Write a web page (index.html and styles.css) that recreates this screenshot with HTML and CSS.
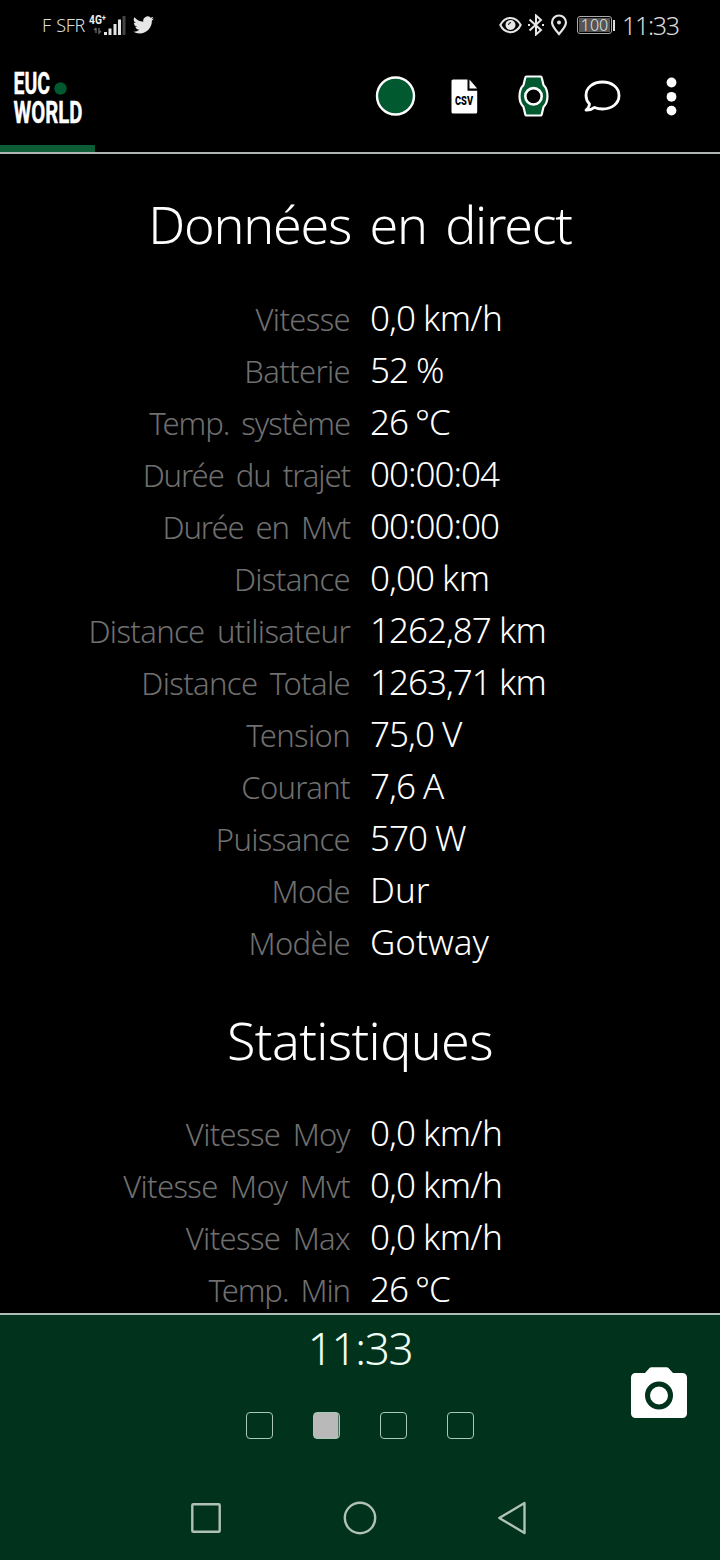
FILE: index.html
```html
<!DOCTYPE html>
<html lang="fr">
<head>
<meta charset="utf-8">
<title>EUC World</title>
<link rel="stylesheet" href="styles.css">
</head>
<body>
<div class="screen">
  <header class="top">
    <div class="status">
      <span class="carrier">F SFR</span>
      <svg class="signal" width="38" height="24" viewBox="0 0 38 24">
        <text class="network" x="1" y="11" textLength="17" lengthAdjust="spacingAndGlyphs">4G⁺</text>
        <path d="M8 15v5M6 17l2-2M11 15v5l2-2" fill="none" stroke="#666" stroke-width="1.4"/>
        <path d="M16 19h3v3h-3zM20.500 15.500h3v6.500h-3zM25.500 11h3v11h-3zM30 6.500h3v15.500h-3z" fill="#e4e4e4"/>
        <path d="M34.500 3h3v19h-3z" fill="#444"/>
      </svg>
      <svg class="bird" width="21" height="18" viewBox="0 2 24 20"><path fill="#e6e6e6" d="M23.950 4.570a10 10 0 0 1-2.820.77 4.960 4.960 0 0 0 2.160-2.720c-.95.550-2 .950-3.130 1.180a4.920 4.920 0 0 0-8.380 4.480C7.690 8.090 4.070 6.130 1.640 3.160a4.920 4.920 0 0 0 1.520 6.570 4.900 4.900 0 0 1-2.230-.61v.06a4.920 4.920 0 0 0 3.950 4.830 5 5 0 0 1-2.210.080 4.940 4.940 0 0 0 4.600 3.420A9.870 9.870 0 0 1 0 19.540a14 14 0 0 0 7.550 2.210c9.050 0 14-7.500 14-13.980l-.02-.64a9.900 9.900 0 0 0 2.420-2.560z"/></svg>
      <span class="spring"></span>
      <svg class="eye" width="23" height="18" viewBox="0 0 23 18"><path d="M1.300 9C6-.5 17-.5 21.700 9 17 18.500 6 18.500 1.300 9z" fill="none" stroke="#e6e6e6" stroke-width="2"/><circle cx="11.500" cy="9" r="5" fill="#e6e6e6"/><path d="M9.500 9a2.500 2.500 0 0 1 2.500-2.500" fill="none" stroke="#000" stroke-width="1"/></svg>
      <svg class="bluetooth" width="18" height="22" viewBox="0 0 18 22"><path d="M2.500 5.500l11.500 10.500-5 4.500V1.500l5 4.500L2.500 16.500" fill="none" stroke="#e6e6e6" stroke-width="2"/><path d="M1 10h2v2H1zM15 10h2v2h-2z" fill="#e6e6e6"/></svg>
      <svg class="pin" width="18" height="22" viewBox="0 0 18 22"><path d="M9 20C5 15.500 2 12 2 8.500a7 7 0 0 1 14 0C16 12 13 15.500 9 20z" fill="none" stroke="#e6e6e6" stroke-width="2.200"/><circle cx="9" cy="8.500" r="2" fill="#e6e6e6"/></svg>
      <span class="battery"><span class="level">100</span></span>
      <span class="clock">11:33</span>
    </div>
    <div class="appbar">
      <svg class="logo" width="74" height="60" viewBox="0 -2 74 60">
        <text x="0.500" y="22" textLength="36.500" lengthAdjust="spacingAndGlyphs">EUC</text>
        <text x="0.500" y="51" textLength="69" lengthAdjust="spacingAndGlyphs">WORLD</text>
        <circle cx="47.500" cy="16.500" r="6.200" fill="#00592f"/>
      </svg>
      <svg class="action" width="44" height="44" viewBox="0 0 44 44"><circle cx="21.500" cy="22" r="18.500" fill="#00592f" stroke="#fff" stroke-width="2.400"/></svg>
      <svg class="action" width="44" height="44" viewBox="0 0 44 44"><path d="M10 5.500H24.500v11.300h9.700V38a1.500 1.500 0 0 1-1.500 1.500H10A1.500 1.500 0 0 1 8.500 38V7A1.500 1.500 0 0 1 10 5.500z" fill="#fff"/><path d="M26.500 5.500l7.700 9H26.500z" fill="#fff"/><text class="csv" x="12" y="30.500" textLength="18" lengthAdjust="spacingAndGlyphs">CSV</text></svg>
      <svg class="action" width="44" height="44" viewBox="0 0 44 44"><path d="M14.500 2.500h14q1 0 1.200 1l1.800 7.500c3 3 4 6 4 11s-1 8-4 11l-1.800 7.500q-.2 1-1.200 1h-14q-1 0-1.200-1L11.500 33c-3-3-4-6-4-11s1-8 4-11l1.800-7.500q.2-1 1.200-1z" fill="#00592f" stroke="#fff" stroke-width="2.200"/><circle cx="21.500" cy="22.300" r="8.200" fill="#000" stroke="#fff" stroke-width="2.600"/></svg>
      <svg class="action" width="44" height="44" viewBox="0 0 44 44"><path d="M8.500 30A12.500 12.500 0 0 1 5 21.500C5 13.500 12 8 21.500 8S38 13.500 38 21.500 31 35 21.500 35q-4.500 0-8-1.600-3.500 2.900-8.500 2.600 3.200-2.500 3.500-6z" fill="none" stroke="#fff" stroke-width="2.800" stroke-linejoin="round"/></svg>
      <svg class="action" width="44" height="44" viewBox="0 0 44 44"><g fill="#fff"><circle cx="21.500" cy="8.500" r="4.900"/><circle cx="21.500" cy="22.800" r="4.900"/><circle cx="21.500" cy="36.600" r="4.900"/></g></svg>
    </div>
    <div class="progress"></div>
  </header>
  <main class="content">
    <h1 class="live">Données en direct</h1>
    <dl class="rows">
      <dt>Vitesse</dt><dd>0,0 <span class="unit">km/h</span></dd>
      <dt>Batterie</dt><dd>52 <span class="unit">%</span></dd>
      <dt class="tight">Temp. système</dt><dd>26 <span class="degree">°C</span></dd>
      <dt class="tight">Durée du trajet</dt><dd>00:00:04</dd>
      <dt class="tight">Durée en Mvt</dt><dd>00:00:00</dd>
      <dt>Distance</dt><dd>0,00 <span class="unit">km</span></dd>
      <dt>Distance utilisateur</dt><dd>1262,87 <span class="unit">km</span></dd>
      <dt>Distance Totale</dt><dd>1263,71 <span class="unit">km</span></dd>
      <dt>Tension</dt><dd>75,0 <span class="unit">V</span></dd>
      <dt>Courant</dt><dd>7,6 <span class="unit">A</span></dd>
      <dt>Puissance</dt><dd>570 <span class="unit">W</span></dd>
      <dt>Mode</dt><dd class="word">Dur</dd>
      <dt>Modèle</dt><dd class="word">Gotway</dd>
    </dl>
    <h1 class="stats">Statistiques</h1>
    <dl class="rows">
      <dt>Vitesse Moy</dt><dd>0,0 <span class="unit">km/h</span></dd>
      <dt>Vitesse Moy Mvt</dt><dd>0,0 <span class="unit">km/h</span></dd>
      <dt>Vitesse Max</dt><dd>0,0 <span class="unit">km/h</span></dd>
      <dt class="tight">Temp. Min</dt><dd>26 <span class="degree">°C</span></dd>
    </dl>
  </main>
  <footer class="bottom">
    <div class="time">11:33</div>
    <div class="pages"><i></i><i class="current"></i><i></i><i></i></div>
    <svg class="camera" width="58" height="52" viewBox="0 0 58 52"><path d="M5.500 6H15l4.500-5q.8-.8 2-.8h15q1.200 0 2 .8L43 6h9.500a4.500 4.500 0 0 1 4.500 4.500v36a4.500 4.500 0 0 1-4.500 4.500h-47A4.500 4.500 0 0 1 1 46.500v-36A4.500 4.500 0 0 1 5.500 6z" fill="#fff"/><circle cx="29" cy="28.500" r="11.500" fill="#fff" stroke="#00321c" stroke-width="5"/></svg>
    <nav class="nav">
      <svg width="40" height="40" viewBox="0 0 40 40"><rect x="6.300" y="6.300" width="27.400" height="27.400" rx="1"/></svg>
      <svg width="40" height="40" viewBox="0 0 40 40"><circle cx="20" cy="20" r="15.200"/></svg>
      <svg width="40" height="40" viewBox="0 0 40 40"><path d="M5.300 20L30.500 5v30z"/></svg>
    </nav>
  </footer>
</div>
</body>
</html>
```
FILE: styles.css
```css
* { box-sizing: border-box; }
body { margin: 0; background: #000; font-family: "Noto Sans", "Open Sans", sans-serif; font-weight: 300; }
.screen { width: 720px; height: 1560px; display: flex; flex-direction: column; overflow: hidden; color: #fff; }

.top { height: 154px; flex: none; border-bottom: 2px solid #b0b4b2; display: flex; flex-direction: column; }
.status { height: 50px; display: flex; align-items: center; padding: 0 41px 0 42px; color: #dcdcdc; white-space: nowrap; }
.carrier { font-size: 18px; width: 46px; letter-spacing: -0.3px; word-spacing: 1px; line-height: 50px; }
.signal { margin-top: -1px; }
.network { font: 700 13px "Roboto", sans-serif; fill: #eee; }
.bird { margin-left: 7px; }
.spring { flex: 1; }
.eye { margin-right: 5px; }
.bluetooth { margin-right: 5px; }
.pin { margin-right: 9px; }
.battery { position: relative; width: 35px; height: 18px; margin-right: 10px; border: 1px solid #aaa; border-radius: 3px; padding: 1px; }
.battery::after { content: ""; position: absolute; right: -4px; top: 3px; width: 2px; height: 11px; background: #ddd; }
.level { display: block; height: 14px; background: #555; font-size: 16px; line-height: 14px; text-align: center; color: #e0e0e0; font-weight: 300; }
.clock { font-size: 25px; width: 57px; letter-spacing: -1.3px; }

.appbar { flex: 1; display: flex; align-items: flex-start; padding: 24px 26px 0 13px; }
.logo { margin: -4px auto 0 0; overflow: visible; }
.logo text { font: 700 30.500px "Roboto", sans-serif; fill: #fff; stroke: #fff; stroke-width: 0.400; }
.action { margin-left: 25px; }
.csv { font: 900 13px "Roboto", sans-serif; fill: #000; }
.progress { width: 95px; height: 7px; background: #0c5c35; }

.content { flex: 1; min-height: 0; overflow: hidden; }
h1 { margin: 0; font-weight: 300; font-size: 52px; line-height: 72px; text-align: center; white-space: nowrap; padding-top: 34px; }
.live { letter-spacing: -1.2px; word-spacing: 6px; }
.stats { letter-spacing: -0.6px; }
.rows { margin: 33px 0 0; display: grid; grid-template-columns: 350px 1fr; column-gap: 20px; grid-auto-rows: 52px; line-height: 52px; white-space: nowrap; }
.live + .rows { margin-bottom: 1px; }
.stats + .rows { margin-top: 32px; }
.rows dt { text-align: right; font-size: 31px; color: #6f6f6f; letter-spacing: -0.650px; word-spacing: 5px; }
.rows .tight { letter-spacing: -1.050px; }
.rows dd { margin: -1px 0 0; font-size: 35px; letter-spacing: -1px; }
.rows .unit { letter-spacing: -0.600px; }
.rows .degree { margin-left: -1px; }
.rows .word { letter-spacing: 0; }

.bottom { position: relative; height: 247px; flex: none; border-top: 2px solid #b0bdb6; background: #00321c; }
.time { text-align: center; font-size: 44px; line-height: 60px; padding-top: 3px; color: #f0fff6; letter-spacing: -1.300px; }
.pages { display: flex; justify-content: center; gap: 40px; margin-top: 34px; }
.pages i { width: 27px; height: 27px; border: 1px solid #a9c9b6; border-radius: 4px; }
.pages .current { background: linear-gradient(90deg, #b9b9b9 24px, #526f60 24px); }
.camera { position: absolute; left: 630px; top: 52px; }
.nav { display: flex; justify-content: center; gap: 114px; margin-top: 59px; }
.nav svg { fill: none; stroke: #b0c2b8; stroke-width: 2.400; stroke-linejoin: round; }
```
